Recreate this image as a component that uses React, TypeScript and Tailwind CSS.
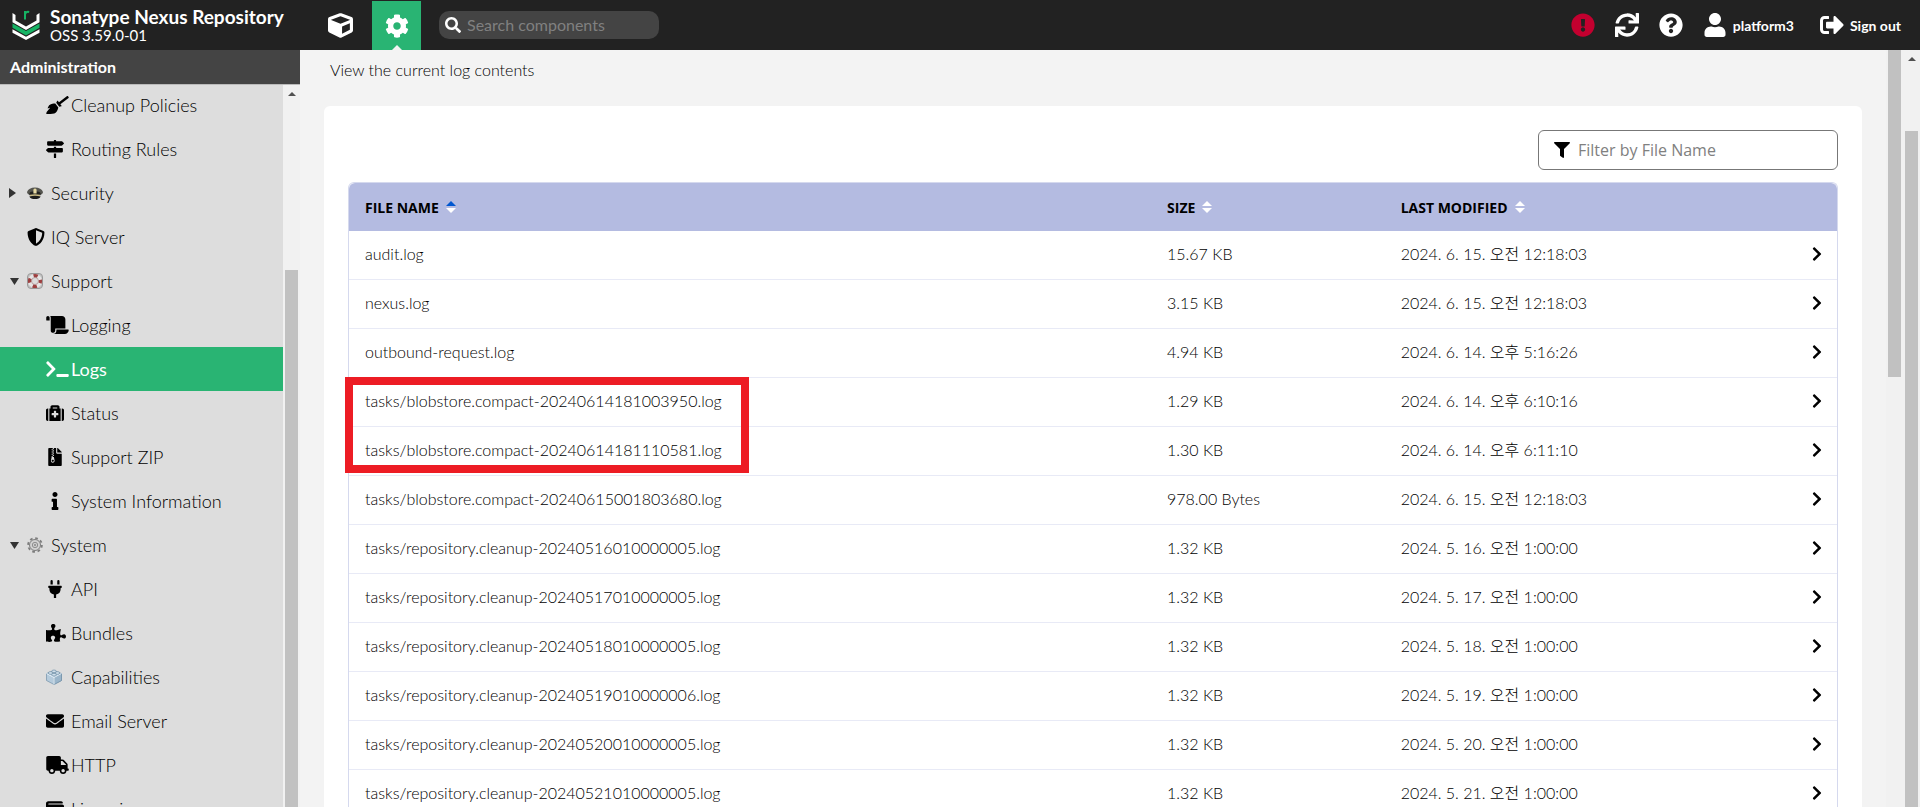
import type { ReactNode } from 'react'
import type { IconType } from 'react-icons'
import {
  FaBroom,
  FaChevronRight,
  FaCog,
  FaCube,
  FaEnvelope,
  FaExclamationCircle,
  FaFileArchive,
  FaFilter,
  FaInfo,
  FaMapSigns,
  FaMedkit,
  FaPlug,
  FaPuzzlePiece,
  FaQuestionCircle,
  FaScroll,
  FaSearch,
  FaShieldAlt,
  FaSignOutAlt,
  FaSync,
  FaTerminal,
  FaTruck,
  FaUser,
  FaWallet,
} from 'react-icons/fa'

type MenuEntry = {
  label: string
  icon: ReactNode
  level: 1 | 2
  state?: 'open' | 'closed'
  active?: boolean
}

const glyph = (Icon: IconType) => <Icon className="size-[18px]" />
const wideGlyph = (Icon: IconType) => <Icon className="h-[18px] w-[23px]" />

const menu: MenuEntry[] = [
  { label: 'Cleanup Policies', icon: wideGlyph(FaBroom), level: 2 },
  { label: 'Routing Rules', icon: glyph(FaMapSigns), level: 2 },
  { label: 'Security', icon: <CapIcon />, level: 1, state: 'closed' },
  { label: 'IQ Server', icon: glyph(FaShieldAlt), level: 1 },
  { label: 'Support', icon: <LifebuoyIcon />, level: 1, state: 'open' },
  { label: 'Logging', icon: wideGlyph(FaScroll), level: 2 },
  { label: 'Logs', icon: wideGlyph(FaTerminal), level: 2, active: true },
  { label: 'Status', icon: glyph(FaMedkit), level: 2 },
  { label: 'Support ZIP', icon: glyph(FaFileArchive), level: 2 },
  { label: 'System Information', icon: glyph(FaInfo), level: 2 },
  { label: 'System', icon: <CogwheelIcon />, level: 1, state: 'open' },
  { label: 'API', icon: glyph(FaPlug), level: 2 },
  { label: 'Bundles', icon: <FaPuzzlePiece className="h-[18px] w-5" />, level: 2 },
  { label: 'Capabilities', icon: <BrickIcon />, level: 2 },
  { label: 'Email Server', icon: glyph(FaEnvelope), level: 2 },
  { label: 'HTTP', icon: wideGlyph(FaTruck), level: 2 },
  { label: 'Licensing', icon: glyph(FaWallet), level: 2 },
]

const logs = [
  { name: 'audit.log', size: '15.67 KB', modified: '2024. 6. 15. 오전 12:18:03' },
  { name: 'nexus.log', size: '3.15 KB', modified: '2024. 6. 15. 오전 12:18:03' },
  { name: 'outbound-request.log', size: '4.94 KB', modified: '2024. 6. 14. 오후 5:16:26' },
  { name: 'tasks/blobstore.compact-20240614181003950.log', size: '1.29 KB', modified: '2024. 6. 14. 오후 6:10:16' },
  { name: 'tasks/blobstore.compact-20240614181110581.log', size: '1.30 KB', modified: '2024. 6. 14. 오후 6:11:10' },
  { name: 'tasks/blobstore.compact-20240615001803680.log', size: '978.00 Bytes', modified: '2024. 6. 15. 오전 12:18:03' },
  { name: 'tasks/repository.cleanup-20240516010000005.log', size: '1.32 KB', modified: '2024. 5. 16. 오전 1:00:00' },
  { name: 'tasks/repository.cleanup-20240517010000005.log', size: '1.32 KB', modified: '2024. 5. 17. 오전 1:00:00' },
  { name: 'tasks/repository.cleanup-20240518010000005.log', size: '1.32 KB', modified: '2024. 5. 18. 오전 1:00:00' },
  { name: 'tasks/repository.cleanup-20240519010000006.log', size: '1.32 KB', modified: '2024. 5. 19. 오전 1:00:00' },
  { name: 'tasks/repository.cleanup-20240520010000005.log', size: '1.32 KB', modified: '2024. 5. 20. 오전 1:00:00' },
  { name: 'tasks/repository.cleanup-20240521010000005.log', size: '1.32 KB', modified: '2024. 5. 21. 오전 1:00:00' },
]

function Logo() {
  return (
    <svg viewBox="0 0 28 30" className="h-[30px] w-7 shrink-0" fill="none" aria-hidden="true">
      <path d="M0.500 3l3 2v5.500L14 16.500l10.500-6V5l3-2v9.200L14 20 0.500 12.200z" fill="#fff" />
      <path d="M0.500 13.500L14 21l13.500-7.500v4.200L14 25.500 0.500 17.700z" fill="#16b364" />
      <path d="M0.500 19.300L14 26.800l13.500-7.500v3.400L14 30 0.500 22.700z" fill="#fff" />
      <path d="M13 9.500V1M13 4.500c.3-2 1.600-3 4.200-2.500" stroke="#16b364" strokeWidth="2" />
    </svg>
  )
}

function CapIcon() {
  return (
    <svg viewBox="0 0 16 16" className="size-4" aria-hidden="true">
      <path d="M0 7c1-3 4-4.500 8-4.500S15 4 16 7c0 1.500-1.500 2.500-3 3H3c-1.500-.5-3-1.500-3-3z" fill="#55554f" />
      <path d="M2.500 8.500C2.500 7 5 6.200 8 6.200s5.500.8 5.500 2.300v1.800h-11z" fill="#22221f" />
      <path d="M3 9.800c3-.8 7-.8 10 0v1.600H3z" fill="#cdbd85" />
      <path d="M2.300 11.400c3.500-1 8-1 11.400 0-1 1.800-3 2.600-5.700 2.600s-4.700-.8-5.700-2.600z" fill="#1c1c1a" />
      <path d="M6.400 4.400L8 3.200l1.600 1.200v4.200H6.400z" fill="#e6d9a2" />
    </svg>
  )
}

function LifebuoyIcon() {
  return (
    <svg viewBox="0 0 16 16" className="size-4" aria-hidden="true">
      <rect x="0.500" y="0.500" width="15" height="15" rx="3.500" fill="#c4c4c4" stroke="#9a9a9a" />
      <circle cx="8" cy="8" r="5.400" fill="#ddd" stroke="#e6e6e6" strokeWidth="3.400" />
      <circle
        cx="8"
        cy="8"
        r="5.400"
        fill="none"
        stroke="#9e4040"
        strokeWidth="3.400"
        strokeDasharray="4.241"
        strokeDashoffset="2.120"
      />
      <circle cx="8" cy="8" r="3.500" fill="none" stroke="#a58080" strokeWidth="0.600" />
    </svg>
  )
}

function CogwheelIcon() {
  return (
    <svg viewBox="0 0 16 16" className="size-4" fill="none" stroke="#7d7d7d" aria-hidden="true">
      <circle cx="8" cy="8" r="6.900" strokeWidth="1.800" strokeDasharray="2.710" />
      <circle cx="8" cy="8" r="5.500" fill="#d2d2d2" />
      <circle cx="8" cy="8" r="2.700" strokeWidth="0.800" />
      <circle cx="8" cy="8" r="1.200" fill="#999" stroke="none" />
    </svg>
  )
}

function BrickIcon() {
  return (
    <svg viewBox="0 0 16 16" className="size-4" stroke="#7390a8" strokeWidth="0.700" aria-hidden="true">
      <path d="M0.500 4.500L8 1.500l7.500 3v7L8 15.500l-7.500-4z" fill="#b5cbdc" />
      <path d="M8 8.500l7.500-4v7L8 15.500z" fill="#9ab5ca" />
      <path d="M0.500 4.500L8 8.500v7M8 8.500l7.500-4" fill="none" stroke="#e8f2fa" strokeWidth="1" />
      <ellipse cx="8" cy="2.300" rx="2.300" ry="1.300" fill="#cfdfeb" />
      <ellipse cx="4.500" cy="4" rx="2.300" ry="1.300" fill="#cfdfeb" />
      <ellipse cx="11.500" cy="4" rx="2.300" ry="1.300" fill="#cfdfeb" />
      <ellipse cx="8" cy="5.700" rx="2.300" ry="1.300" fill="#cfdfeb" />
    </svg>
  )
}

function Caret({ state }: { state?: 'open' | 'closed' }) {
  return (
    <span className="flex w-[27px] shrink-0 items-center justify-start pl-[9px]">
      {state && (
        <svg viewBox="0 0 10 10" className="size-[10px]" fill="#333" aria-hidden="true">
          <path d={state === 'open' ? 'M1 2h9L5.500 9z' : 'M0 0v10l7-5z'} />
        </svg>
      )}
    </span>
  )
}

function MenuItem({ label, icon, level, state, active }: MenuEntry) {
  return (
    <li>
      <a
        href="#"
        aria-current={active ? 'page' : undefined}
        className={`flex h-11 items-center text-[18px] ${
          active ? 'bg-[#29b473] font-normal text-white' : 'font-light text-black'
        }`}
      >
        {level === 1 && <Caret state={state} />}
        <span className={`flex shrink-0 items-center ${level === 1 ? 'w-6' : 'ml-[46px] w-[25px]'}`}>{icon}</span>
        <span className="whitespace-nowrap">{label}</span>
      </a>
    </li>
  )
}

function ScrollArrow() {
  return (
    <svg viewBox="0 0 8 4" className="mt-[7px] h-1 w-2" fill="#505050" aria-hidden="true">
      <path d="M0 4l4-4 4 4z" />
    </svg>
  )
}

function SortIcon({ sorted }: { sorted?: boolean }) {
  return (
    <svg viewBox="0 0 10 12" className="h-3 w-[10px]" aria-hidden="true">
      <path d="M0 5l5-5 5 5z" fill={sorted ? '#0057d0' : '#fff'} />
      <path d="M0 7l5 5 5-5z" fill="#fff" />
    </svg>
  )
}

function SortHeader({ label, sorted, className }: { label: string; sorted?: boolean; className?: string }) {
  return (
    <th className={`px-4 text-left ${className ?? ''}`} aria-sort={sorted ? 'ascending' : undefined}>
      <button type="button" className="flex items-center gap-[7px] font-bold text-black">
        {label}
        <SortIcon sorted={sorted} />
      </button>
    </th>
  )
}

function Header() {
  return (
    <header className="flex h-[50px] shrink-0 items-center bg-[#222] text-white">
      <div className="flex w-[312px] items-center gap-[10px] pl-3">
        <Logo />
        <div className="whitespace-nowrap">
          <h1 className="text-[19px] leading-5 font-bold">Sonatype Nexus Repository</h1>
          <p className="text-[15px] leading-4">OSS 3.59.0-01</p>
        </div>
      </div>
      <button type="button" aria-label="Browse" className="flex h-full w-[60px] items-center justify-center pr-1">
        <FaCube className="size-[25px]" />
      </button>
      <button
        type="button"
        aria-label="Administration"
        className="relative mt-px flex h-[49px] w-[49px] items-center justify-center bg-[#29b473]"
      >
        <FaCog className="size-6" />
        <span className="absolute bottom-0 border-x-[5px] border-b-[5px] border-x-transparent border-b-[#f3f3f3]" />
      </button>
      <label className="ml-[18px] flex h-7 w-[220px] items-center gap-[6px] rounded-[10px] bg-[#444] px-[6px]">
        <FaSearch className="size-4 shrink-0" />
        <input
          type="text"
          aria-label="Search components"
          placeholder="Search components"
          className="w-full min-w-0 bg-transparent text-base placeholder:text-[#808080] focus:outline-none"
        />
      </label>
      <div className="ml-auto flex items-center pr-[19px] text-[14px] font-bold">
        <button type="button" aria-label="System status" className="mr-5 text-[#c3002f]">
          <FaExclamationCircle className="size-6" />
        </button>
        <button type="button" aria-label="Refresh" className="mr-5">
          <FaSync className="size-6" />
        </button>
        <button type="button" aria-label="Help" className="mr-5">
          <FaQuestionCircle className="size-6" />
        </button>
        <button type="button" className="mr-[26px] flex items-center gap-[6px]">
          <FaUser className="size-6" />
          platform3
        </button>
        <button type="button" className="flex items-center gap-[6px]">
          <FaSignOutAlt className="size-6" />
          Sign out
        </button>
      </div>
    </header>
  )
}

function Sidebar() {
  return (
    <aside className="flex w-[300px] shrink-0 flex-col bg-[#ddd]">
      <h2 className="flex h-[35px] shrink-0 items-center border-b border-[#bbb] bg-[#444] px-[10px] text-base font-bold text-white">
        Administration
      </h2>
      <div className="flex min-h-0 flex-1">
        <nav aria-label="Administration" className="min-w-0 flex-1 overflow-hidden">
          <ul className="-mt-0.5">
            {menu.map((entry) => (
              <MenuItem key={entry.label} {...entry} />
            ))}
          </ul>
        </nav>
        <div aria-hidden="true" className="flex w-[17px] flex-col items-center bg-[#f1f1f1]">
          <ScrollArrow />
          <div className="mt-[174px] w-[13px] flex-1 bg-[#c1c1c1]" />
        </div>
      </div>
    </aside>
  )
}

function LogTable() {
  return (
    <div className="relative mt-3 rounded-t-md border border-b-0 border-[#d5d9ee]">
      <table className="w-full table-fixed border-separate border-spacing-0 text-base text-black">
        <thead>
          <tr className="h-12 font-['Open_Sans',sans-serif] text-[14px] *:bg-[#b4bbe1]">
            <SortHeader label="FILE NAME" sorted className="w-[53.9%] rounded-tl-md" />
            <SortHeader label="SIZE" className="w-[15.7%]" />
            <SortHeader label="LAST MODIFIED" />
            <th className="w-14 rounded-tr-md" aria-label="Open" />
          </tr>
        </thead>
        <tbody>
          {logs.map((log) => (
            <tr key={log.name} className="h-[49px] font-light *:border-b *:border-[#e8eaf6] *:pt-0 *:pb-0.5">
              <td className="px-4 whitespace-nowrap">{log.name}</td>
              <td className="px-4 whitespace-nowrap">{log.size}</td>
              <td className="px-4 whitespace-nowrap">{log.modified}</td>
              <td className="pr-3">
                <FaChevronRight className="ml-auto size-4" aria-hidden="true" />
              </td>
            </tr>
          ))}
        </tbody>
      </table>
      {/* Highlight round the two compact tasks */}
      <div className="pointer-events-none absolute top-[194px] -left-1 h-24 w-[404px] border-8 border-[#ed1c24]" />
    </div>
  )
}

export default function App() {
  return (
    <div className="flex h-screen flex-col overflow-hidden font-['Lato','Noto_Sans_CJK_KR',sans-serif]">
      <Header />
      <div className="flex min-h-0 flex-1">
        <Sidebar />
        <main className="min-w-0 flex-1 overflow-hidden bg-[#f3f3f3] px-6">
          <p className="flex h-14 items-center px-[6px] pb-4 text-base font-light text-black">
            View the current log contents
          </p>
          <section className="rounded-t-md bg-white p-6">
            <label className="ml-auto flex h-10 w-[300px] items-center gap-2 rounded-md border border-[#777] px-[15px]">
              <FaFilter className="size-4 shrink-0" />
              <input
                type="text"
                aria-label="Filter by File Name"
                placeholder="Filter by File Name"
                className="w-full min-w-0 font-['Open_Sans',sans-serif] text-base placeholder:text-[#808080] focus:outline-none"
              />
            </label>
            <LogTable />
          </section>
        </main>
        <div aria-hidden="true" className="flex w-[17px] shrink-0 flex-col items-center bg-[#f1f1f1]">
          <div className="h-[327px] w-[13px] bg-[#c1c1c1]" />
        </div>
        <div aria-hidden="true" className="flex w-[17px] shrink-0 flex-col items-center bg-[#f1f1f1]">
          <ScrollArrow />
          <div className="mt-[70px] w-[13px] flex-1 bg-[#c1c1c1]" />
        </div>
      </div>
    </div>
  )
}
